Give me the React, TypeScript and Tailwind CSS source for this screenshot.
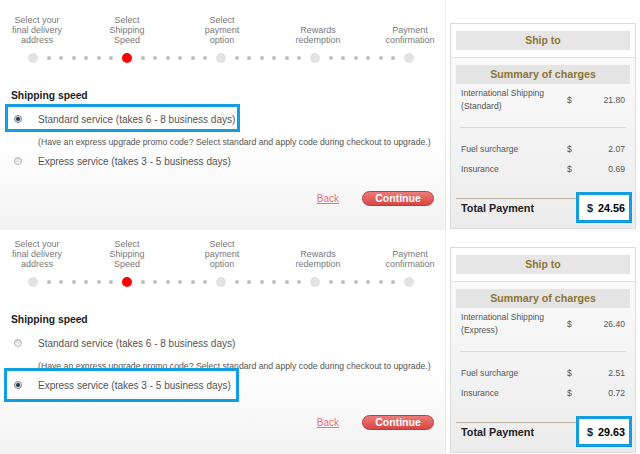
import React from "react";

type Speed = "standard" | "express";

interface Step {
  lines: string[];
  gap: string;
}

const STEPS: Step[] = [
  { lines: ["Select your", "final delivery", "address"], gap: "ml-[4px]" },
  { lines: ["Select", "Shipping", "Speed"], gap: "ml-[24px]" },
  { lines: ["Select", "payment", "option"], gap: "ml-[29px]" },
  { lines: ["Rewards", "redemption"], gap: "ml-[30px]" },
  { lines: ["Payment", "confirmation"], gap: "ml-[26px]" },
];

interface PanelData {
  selected: Speed;
  kind: string;
  shipping: string;
  fuel: string;
  insurance: string;
  total: string;
  height: string;
  leftPad: string;
  cardPad: string;
  boxClass: string;
}

const PANELS: PanelData[] = [
  {
    selected: "standard",
    kind: "Standard",
    shipping: "21.80",
    fuel: "2.07",
    insurance: "0.69",
    total: "24.56",
    height: "h-[230px]",
    leftPad: "pt-[15px]",
    cardPad: "pt-[23px]",
    boxClass: "-left-[6px] -top-[7px] -bottom-[5px]",
  },
  {
    selected: "express",
    kind: "Express",
    shipping: "26.40",
    fuel: "2.51",
    insurance: "0.72",
    total: "29.63",
    height: "h-[224px]",
    leftPad: "pt-[9px]",
    cardPad: "pt-[17px]",
    boxClass: "-left-[7px] -top-[9px] -bottom-[9px]",
  },
];

function StepLabels() {
  return (
    <div className="flex items-end">
      {STEPS.map((s, i) => (
        <div
          key={i}
          className={`${s.gap} w-[66px] text-center text-[9px] leading-[10px] text-[#7a7a7a]`}
        >
          {s.lines.map((l) => (
            <div key={l}>{l}</div>
          ))}
        </div>
      ))}
    </div>
  );
}

function Dots() {
  return (
    <div className="flex w-[84px] items-center justify-evenly">
      {[0, 1, 2, 3, 4, 5].map((d) => (
        <span key={d} className="h-[4px] w-[4px] rounded-full bg-[#bdbdbd]" />
      ))}
    </div>
  );
}

function StepTrack() {
  const current = 1;
  return (
    <div className="mt-[8px] flex h-[10px] items-center pl-[28px]">
      {STEPS.map((_, i) => (
        <React.Fragment key={i}>
          <span
            className={
              i === current
                ? "h-[10px] w-[10px] rounded-full bg-[#ff0000]"
                : "h-[10px] w-[10px] rounded-full bg-[#e3e3e3]"
            }
          />
          {i < STEPS.length - 1 && <Dots />}
        </React.Fragment>
      ))}
    </div>
  );
}

function Radio({ checked }: { checked: boolean }) {
  if (checked) {
    return (
      <span className="flex h-[8px] w-[8px] items-center justify-center rounded-full border border-[#8c8c8c] bg-[#d6d9dd]">
        <span className="h-[4px] w-[4px] rounded-full bg-[#203b5c]" />
      </span>
    );
  }
  return (
    <span className="h-[8px] w-[8px] rounded-full border border-[#b8b8b8] bg-linear-to-b from-[#dcdcdc] to-[#f8f8f8]" />
  );
}

function Option({
  label,
  checked,
  boxClass,
  className,
}: {
  label: string;
  checked: boolean;
  boxClass: string;
  className: string;
}) {
  return (
    <div className={`relative flex h-[16px] items-center pl-[3px] ${className}`}>
      {checked && (
        <span
          className={`absolute w-[235px] border-[3px] border-[#119ee0] ${boxClass}`}
        />
      )}
      <Radio checked={checked} />
      <span className="ml-[16px] text-[10px] text-[#555]">{label}</span>
    </div>
  );
}

function ShippingForm({ data }: { data: PanelData }) {
  return (
    <div
      className={`w-[446px] shrink-0 border-r border-[#ececec] bg-linear-to-b from-white from-60% to-[#f3f3f3] ${data.leftPad}`}
    >
      <StepLabels />
      <StepTrack />

      <div className="pl-[11px]">
        <h3 className="mt-[26px] text-[10.3px] font-bold leading-[14px] text-[#222]">
          Shipping speed
        </h3>
        <Option
          className="mt-[8px]"
          label="Standard service (takes 6 - 8 business days)"
          checked={data.selected === "standard"}
          boxClass={data.boxClass}
        />
        <p className="mt-[9px] pl-[27px] text-[8.7px] leading-[12px] text-[#555]">
          (Have an express upgrade promo code? Select standard and apply code during checkout to
          upgrade.)
        </p>
        <Option
          className="mt-[5px]"
          label="Express service (takes 3 - 5 business days)"
          checked={data.selected === "express"}
          boxClass={data.boxClass}
        />
      </div>

      <div className="mt-[22px] flex items-center justify-end pr-[11px]">
        <a className="mr-[23px] text-[10px] text-[#e8707a] underline">Back</a>
        <button className="flex h-[15px] w-[72px] items-center justify-center rounded-full border border-[#c23a3a] bg-linear-to-b from-[#ec7b7b] to-[#d84444] text-[10.5px] font-bold text-white">
          Continue
        </button>
      </div>
    </div>
  );
}

function ChargeRow({ label, amount, height }: { label: string; amount: string; height: string }) {
  return (
    <div className={`flex items-center pl-[5px] pr-[5px] text-[8.6px] text-[#555] ${height}`}>
      <span className="w-[106px]">{label}</span>
      <span>$</span>
      <span className="flex-1 text-right">{amount}</span>
    </div>
  );
}

function Summary({ data }: { data: PanelData }) {
  return (
    <div className={`ml-[4px] ${data.cardPad}`}>
      <div className="flex h-[206px] w-[186px] flex-col border border-[#dcdcdc]">
        <div className="border-b border-[#e2e2e2] bg-white px-[5px] py-[7px]">
          <div className="flex h-[19px] items-center justify-center bg-[#e6e6e6] text-[10.5px] font-bold text-[#8b7634]">
            Ship to
          </div>
        </div>

        <div className="flex-1 bg-linear-to-b from-[#fafafa] to-[#ececec] px-[5px] pt-[7px]">
          <div className="flex h-[19px] items-center justify-center bg-[#e4e4e4] text-[10.7px] font-bold text-[#8b7634]">
            Summary of charges
          </div>

          <div className="mt-[3px] flex items-center pl-[5px] pr-[5px] text-[8.6px] leading-[13.4px] text-[#555]">
            <span className="w-[106px]">
              International Shipping
              <br />({data.kind})
            </span>
            <span>$</span>
            <span className="flex-1 text-right">{data.shipping}</span>
          </div>

          <div className="mx-[4px] mt-[13px] h-px bg-[#d9d9d9]" />

          <div className="mt-[12px]">
            <ChargeRow label="Fuel surcharge" amount={data.fuel} height="h-[20px]" />
            <ChargeRow label="Insurance" amount={data.insurance} height="h-[19px]" />
          </div>

          <div className="mt-[19px] h-px bg-[#bcb29e]" />

          <div className="flex h-[19px] items-center justify-between pl-[5px] pr-[5px] text-[10.8px] font-bold text-[#222]">
            <span>Total Payment</span>
            <span className="relative flex h-full items-center">
              <span className="absolute -bottom-[5px] -left-[11px] -right-[7px] -top-[7px] border-[3px] border-[#119ee0] bg-white" />
              <span className="relative">$</span>
              <span className="relative ml-[5px] text-black">{data.total}</span>
            </span>
          </div>
        </div>
      </div>
    </div>
  );
}

function CheckoutPanel({ data }: { data: PanelData }) {
  return (
    <section className={`flex overflow-hidden bg-white ${data.height}`}>
      <ShippingForm data={data} />
      <Summary data={data} />
    </section>
  );
}

export default function App() {
  return (
    <div className="w-[640px] bg-white font-['Liberation_Sans',Arial,sans-serif]">
      {PANELS.map((p) => (
        <CheckoutPanel key={p.selected} data={p} />
      ))}
    </div>
  );
}
